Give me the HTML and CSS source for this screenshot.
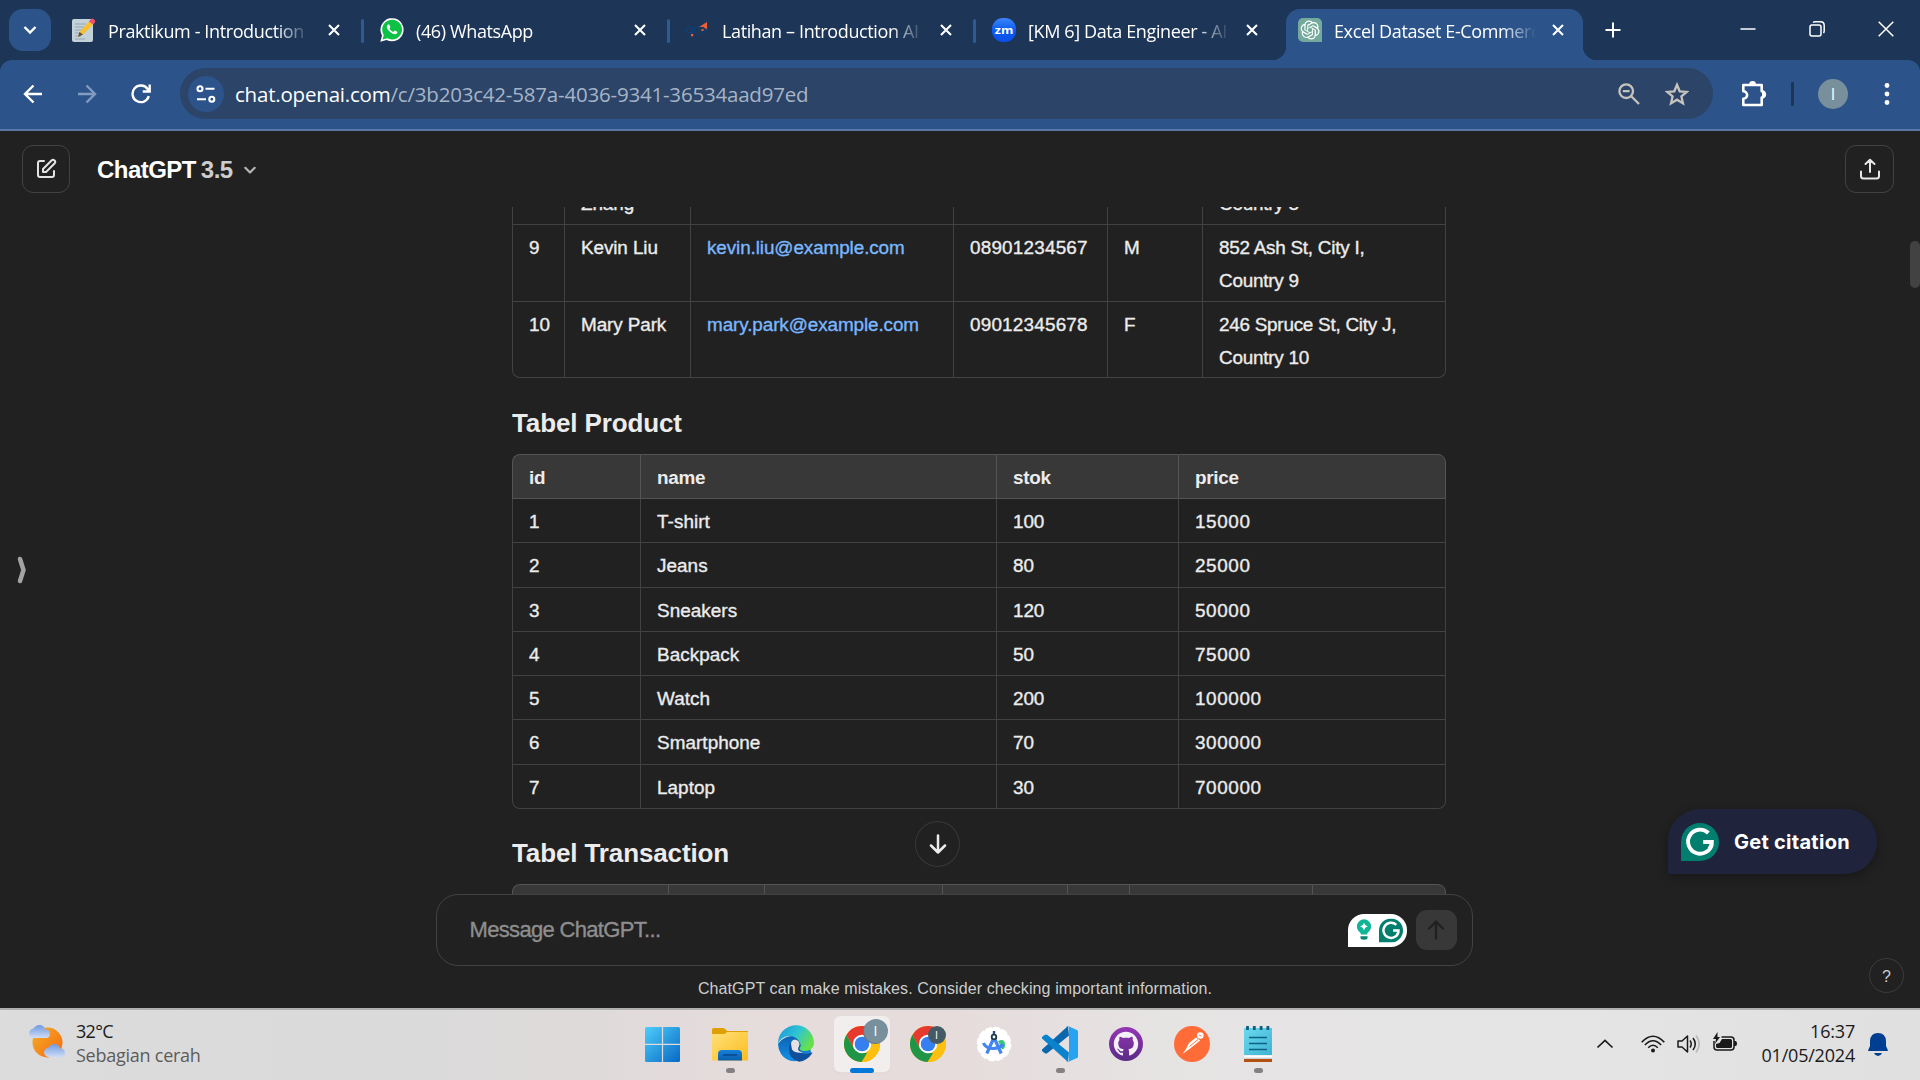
FILE: index.html
```html
<!DOCTYPE html>
<html lang="id">
<head>
<meta charset="utf-8">
<title>Excel Dataset E-Commerce</title>
<link rel="stylesheet" href="styles.css">
</head>
<body>
<svg class="defs" width="0" height="0" aria-hidden="true">
  <defs>
    <symbol id="close" viewBox="0 0 12 12"><path d="M1 1l10 10M11 1L1 11" fill="none" stroke="currentColor" stroke-width="2.1"/></symbol>
    <symbol id="grammarly" viewBox="0 0 38 38"><path d="M19 0a19 19 0 1 1 0 38H0V19A19 19 0 0 1 19 0z" fill="#027e6f"/><path d="M27.4 10A12 12 0 1 0 31 20.2M22.2 19h8.600q-.2 4-2.600 7" fill="none" stroke="#fff" stroke-width="3.900"/></symbol>
    <symbol id="chrome" viewBox="0 0 36 36">
      <circle cx="18" cy="18" r="18" fill="#fbbc09"/>
      <path d="M2.400 9A18 18 0 0 1 33.600 9H18L10.200 22.500z" fill="#e63a2e"/>
      <path d="M2.400 9L10.200 22.500 18 27H25.800L17.600 36A18 18 0 0 1 2.400 9z" fill="#209547"/>
      <path d="M33.600 9A18 18 0 0 1 17.600 36L25.800 22.500 18 9z" fill="#fdc00f"/>
      <circle cx="18" cy="18" r="9.200" fill="#fff"/><circle cx="18" cy="18" r="7.300" fill="#357ff0"/>
    </symbol>
    <linearGradient id="win" gradientUnits="userSpaceOnUse" x1="0" y1="0" x2="36" y2="36"><stop offset="0" stop-color="#4fd0fc"/><stop offset="1" stop-color="#0768c4"/></linearGradient>
    <linearGradient id="folder" x1="0" y1="0" x2="1" y2="1"><stop offset="0" stop-color="#ffe07a"/><stop offset="1" stop-color="#fcbd1e"/></linearGradient>
    <linearGradient id="blueV" x1="0" y1="0" x2="0" y2="1"><stop offset="0" stop-color="#1581dc"/><stop offset="1" stop-color="#0b5fab"/></linearGradient>
    <linearGradient id="edgeTop" x1="0" y1="0" x2="1" y2=".5"><stop offset="0" stop-color="#1792dc"/><stop offset=".55" stop-color="#2ec5d3"/><stop offset="1" stop-color="#66e04c"/></linearGradient>
    <linearGradient id="edgeLow" x1="0" y1="0" x2="0" y2="1"><stop offset="0" stop-color="#0b62b6"/><stop offset="1" stop-color="#1590e2"/></linearGradient>
    <linearGradient id="sun" x1="0" y1="0" x2="1" y2="1"><stop offset="0" stop-color="#f0b22c"/><stop offset="1" stop-color="#fb650a"/></linearGradient>
    <linearGradient id="cloud" x1="0" y1="0" x2="0" y2="1"><stop offset="0" stop-color="#6f9ae0"/><stop offset="1" stop-color="#cfdcf6"/></linearGradient>
    <linearGradient id="note" x1="0" y1="0" x2="1" y2="1"><stop offset="0" stop-color="#6bd9ee"/><stop offset="1" stop-color="#3fb3d3"/></linearGradient>
    <linearGradient id="zoomBlue" x1="0" y1="0" x2="0" y2="1"><stop offset="0" stop-color="#3c86f8"/><stop offset=".5" stop-color="#0b5cf2"/><stop offset="1" stop-color="#0a4fe6"/></linearGradient>
    <linearGradient id="purple" x1="0" y1="0" x2="0" y2="1"><stop offset="0" stop-color="#9437b4"/><stop offset="1" stop-color="#5b2a86"/></linearGradient>
  </defs>
</svg>

<header class="tabstrip">
  <button class="tab-search"><svg width="14" height="10" viewBox="0 0 14 10"><path d="M1.500 2l5.500 5.500L12.500 2" fill="none" stroke="#fff" stroke-width="2.400"/></svg></button>
  <div class="tabs">
    <div class="tab first">
      <svg class="fav" viewBox="0 0 24 24"><rect x="0" y="1" width="21" height="23" rx="2" fill="#c3d1d9"/><path d="M3 6h11M3 9h9M3 12h7M3 15h5M3 18h6M3 21h10" stroke="#93a7b3"/><path d="M6 19l1.500-5L18 2.500l4 3L11 16.500z" fill="#fbc02d"/><path d="M17 3.500l2-2.600q2-1.400 4 1.600.6 1-.2 2l-1.800 2z" fill="#ef4f6b"/><path d="M6 19l1.500-5 3.500 2.500z" fill="#5a5048"/></svg>
      <span class="title">Praktikum - Introduction AI</span><svg class="x"><use href="#close"/></svg>
    </div>
    <div class="tab">
      <svg class="fav" viewBox="0 0 24 24"><path d="M.3 23.800L2 17.600A11.600 11.600 0 1 1 6.600 22z" fill="#fff"/><path d="M2.500 21.600l1.300-4.600A9.900 9.900 0 1 1 7.400 20.300z" fill="#0cc143"/><path transform="translate(1.600 .9) scale(.87)" fill="#fff" d="M17.472 14.382c-.297-.149-1.758-.867-2.030-.967-.273-.099-.471-.148-.67.15-.197.297-.767.966-.94 1.164-.173.199-.347.223-.644.075-.297-.15-1.255-.463-2.390-1.475-.883-.788-1.480-1.761-1.653-2.059-.173-.297-.018-.458.13-.606.134-.133.298-.347.446-.52.149-.174.198-.298.298-.497.099-.198.05-.371-.025-.52-.075-.149-.669-1.612-.916-2.207-.242-.579-.487-.5-.669-.51-.173-.008-.371-.01-.57-.01-.198 0-.52.074-.792.372-.272.297-1.040 1.016-1.040 2.479 0 1.462 1.065 2.875 1.213 3.074.149.198 2.096 3.200 5.077 4.487.709.306 1.262.489 1.694.625.712.227 1.360.195 1.871.118.571-.085 1.758-.719 2.006-1.413.248-.694.248-1.289.173-1.413-.074-.124-.272-.198-.57-.347"/></svg>
      <span class="title">(46) WhatsApp</span><svg class="x"><use href="#close"/></svg>
    </div>
    <div class="tab">
      <svg class="fav" viewBox="0 0 24 24"><g fill="none" stroke="#123f73" stroke-width="1.300"><circle cx="3.500" cy="12" r="3"/><path d="M8.500 16v-4.500a2.400 2.400 0 0 1 5 0V16M16 12.500h5a2.600 2.600 0 1 0-1 2.500"/></g><path d="M13 9l8-5v7.500l-3.500-2.500zM5 16h2.200v2.200H5zM15.500 11h2v2h-2z" fill="#ec5f3a"/></svg>
      <span class="title">Latihan – Introduction AI</span><svg class="x"><use href="#close"/></svg>
    </div>
    <div class="tab last">
      <svg class="fav" viewBox="0 0 24 24"><rect width="24" height="24" rx="11" fill="url(#zoomBlue)"/><text x="12" y="15.800" text-anchor="middle" class="zm" textLength="18.500" lengthAdjust="spacingAndGlyphs">zm</text></svg>
      <span class="title">[KM 6] Data Engineer - AI</span><svg class="x"><use href="#close"/></svg>
    </div>
    <div class="tab active">
      <svg class="fav" viewBox="0 0 24 24"><path d="M5 0h14a5 5 0 0 1 5 5v19H5a5 5 0 0 1-5-5V5a5 5 0 0 1 5-5z" fill="#74aa9c"/><path transform="translate(2.600 2.500) scale(.79)" fill="#fff" d="M22.2819 9.8211a5.9847 5.9847 0 0 0-.5157-4.9108 6.0462 6.0462 0 0 0-6.5098-2.9A6.0651 6.0651 0 0 0 4.9807 4.1818a5.9847 5.9847 0 0 0-3.9977 2.9 6.0462 6.0462 0 0 0 .7427 7.0966 5.98 5.98 0 0 0 .511 4.9107 6.051 6.051 0 0 0 6.5146 2.9001A5.9847 5.9847 0 0 0 13.2599 24a6.0557 6.0557 0 0 0 5.7718-4.2058 5.9894 5.9894 0 0 0 3.9977-2.9001 6.0557 6.0557 0 0 0-.7475-7.0729zm-9.022 12.6081a4.4755 4.4755 0 0 1-2.8764-1.0408l.1419-.0804 4.7783-2.7582a.7948.7948 0 0 0 .3927-.6813v-6.7369l2.02 1.1686a.071.071 0 0 1 .038.052v5.5826a4.504 4.504 0 0 1-4.4945 4.4944zm-9.6607-4.1254a4.4708 4.4708 0 0 1-.5346-3.0137l.142.0852 4.783 2.7582a.7712.7712 0 0 0 .7806 0l5.8428-3.3685v2.3324a.0804.0804 0 0 1-.0332.0615L9.74 19.9502a4.4992 4.4992 0 0 1-6.1408-1.6464zM2.3408 7.8956a4.485 4.485 0 0 1 2.3655-1.9728V11.6a.7664.7664 0 0 0 .3879.6765l5.8144 3.3543-2.0201 1.1685a.0757.0757 0 0 1-.071 0l-4.8303-2.7865A4.504 4.504 0 0 1 2.3408 7.872zm16.5963 3.8558L13.1038 8.364 15.1192 7.2a.0757.0757 0 0 1 .071 0l4.8303 2.7913a4.4944 4.4944 0 0 1-.6765 8.1042v-5.6772a.79.79 0 0 0-.407-.667zm2.0107-3.0231l-.142-.0852-4.7735-2.7818a.7759.7759 0 0 0-.7854 0L9.409 9.2297V6.8974a.0662.0662 0 0 1 .0284-.0615l4.8303-2.7866a4.4992 4.4992 0 0 1 6.6802 4.66zM8.3065 12.863l-2.02-1.1638a.0804.0804 0 0 1-.038-.0567V6.0742a4.4992 4.4992 0 0 1 7.3757-3.4537l-.142.0805L8.704 5.459a.7948.7948 0 0 0-.3927.6813zm1.0976-2.3654l2.602-1.4998 2.6069 1.4998v2.9994l-2.5974 1.4997-2.6067-1.4997Z"/></svg>
      <span class="title">Excel Dataset E-Commerce</span><svg class="x"><use href="#close"/></svg>
    </div>
  </div>
  <svg class="plus" width="16" height="16" viewBox="0 0 16 16"><path d="M8 .5v15M.5 8h15" stroke="#fff" stroke-width="2"/></svg>
  <div class="window-controls">
    <svg width="16" height="16" viewBox="0 0 16 16"><path d="M.5 8h15" stroke="#fff" stroke-width="1.500"/></svg>
    <svg width="16" height="16" viewBox="0 0 16 16" fill="none" stroke="#fff" stroke-width="1.500"><rect x="1" y="4" width="11" height="11" rx="2"/><path d="M4 1.500q1-.7 2-.7h5.500q3.700 0 3.700 3.700V10q0 1-.7 2"/></svg>
    <svg width="16" height="16" viewBox="0 0 16 16"><path d="M.7.700l14.600 14.600M15.300.700L.7 15.300" stroke="#fff" stroke-width="1.500"/></svg>
  </div>
</header>

<nav class="toolbar">
  <div class="nav-buttons">
    <svg width="20" height="20" viewBox="0 0 20 20" fill="none" stroke="#fff" stroke-width="2.400"><path d="M19 10H2.500M10.500 1.500L2 10l8.500 8.500"/></svg>
    <svg width="20" height="20" viewBox="0 0 20 20" fill="none" stroke="#819bc1" stroke-width="2.400"><path d="M1 10h16.500M9.500 1.500L18 10l-8.500 8.500"/></svg>
    <svg width="20" height="20" viewBox="0 0 20 20" fill="none" stroke="#fff" stroke-width="2.400"><path d="M17.800 12.200A8.300 8.300 0 1 1 16.600 5L18 6.800M18.700.5v7h-7"/></svg>
  </div>
  <div class="omnibox">
    <span class="site"><svg width="20" height="18" viewBox="0 0 20 18" fill="none" stroke="#fff" stroke-width="2.100"><circle cx="4" cy="3.800" r="2.500"/><path d="M9.500 3.800h9M1 14.200h9"/><circle cx="15.800" cy="14.200" r="2.500"/></svg></span>
    <span class="url">chat.openai.com<span>/c/3b203c42-587a-4036-9341-36534aad97ed</span></span>
    <svg class="lens" width="22" height="22" viewBox="0 0 22 22" fill="none" stroke="#c6c3bf" stroke-width="2.300"><circle cx="8.200" cy="8.200" r="6.800"/><path d="M13 13l8 8M4.800 8.200h6.800"/></svg>
    <svg class="star" width="24" height="24" viewBox="0 0 24 24" fill="none" stroke="#c6c3bf" stroke-width="2.300"><path d="M12 2.800l2.700 6.500 7 .6-5.300 4.600 1.600 6.900-6-3.700-6 3.700 1.600-6.900L2.300 9.900l7-.6z"/></svg>
  </div>
  <svg class="puzzle" width="27" height="27" viewBox="0 0 27 27"><path d="M3.300 5h18.400v6.200a3.200 3.200 0 0 1 0 6.400V25H3.300v-6.200a3.800 3.800 0 0 0 0-7.600z" fill="none" stroke="#fff" stroke-width="2.600" stroke-linejoin="round"/><path d="M9.300 4.200a3.300 3.300 0 0 1 6.600 0zM22 11.200a3.300 3.300 0 0 1 0 6.600z" fill="#fff"/></svg>
  <i class="divider"></i>
  <span class="avatar">I</span>
  <svg class="dots" width="6" height="26" viewBox="0 0 6 26" fill="#fff"><circle cx="3" cy="4.500" r="2.400"/><circle cx="3" cy="13" r="2.400"/><circle cx="3" cy="21.500" r="2.400"/></svg>
</nav>

<main class="app">
  <div class="topbar">
    <button class="square"><svg width="24" height="24" viewBox="0 0 24 24" fill="#e3e3e3"><path fill-rule="evenodd" d="M16.793 2.793a3.121 3.121 0 1 1 4.414 4.414l-8.500 8.500A1 1 0 0 1 12 16H9a1 1 0 0 1-1-1v-3a1 1 0 0 1 .293-.707l8.500-8.500Zm3 1.414a1.121 1.121 0 0 0-1.586 0L10 12.414V14h1.586l8.207-8.207a1.121 1.121 0 0 0 0-1.586ZM6 5a1 1 0 0 0-1 1v12a1 1 0 0 0 1 1h12a1 1 0 0 0 1-1v-4a1 1 0 1 1 2 0v4a3 3 0 0 1-3 3H6a3 3 0 0 1-3-3V6a3 3 0 0 1 3-3h4a1 1 0 1 1 0 2H6Z"/></svg></button>
    <div class="model"><span>ChatGPT</span><span class="ver">3.5</span><svg width="12" height="9" viewBox="0 0 12 9"><path d="M1.300 1.800L6 6.500l4.700-4.700" fill="none" stroke="#b4b4b4" stroke-width="2.200" stroke-linecap="round" stroke-linejoin="round"/></svg></div>
    <button class="square share"><svg width="22" height="22" viewBox="0 0 22 22" fill="none" stroke="#e8e8e8" stroke-width="2" stroke-linecap="round" stroke-linejoin="round"><path d="M11 14V2M6.500 6L11 1.700 15.500 6M2 13.500V18q0 2.500 2.500 2.500h13Q20 20.500 20 18v-4.500"/></svg></button>
  </div>

  <div class="thread">
    <div class="message">
      <table class="customers">
        <colgroup><col class="w52"><col class="w126"><col class="w263"><col class="w154"><col class="w95"><col class="w244"></colgroup>
        <tr class="r8"><td>8</td><td>Linda Zhang</td><td></td><td></td><td></td><td>Cedar St, City H,<br>Country 8</td></tr>
        <tr class="r9"><td>9</td><td>Kevin Liu</td><td><a>kevin.liu@example.com</a></td><td class="phone">08901234567</td><td>M</td><td>852 Ash St, City I,<br>Country 9</td></tr>
        <tr class="r10"><td>10</td><td>Mary Park</td><td><a>mary.park@example.com</a></td><td class="phone">09012345678</td><td>F</td><td>246 Spruce St, City J,<br>Country 10</td></tr>
      </table>
      <h3 class="h-prod">Tabel Product</h3>
      <table class="products">
        <colgroup><col class="w128"><col class="w356"><col class="w182"><col class="w268"></colgroup>
        <thead><tr><th>id</th><th>name</th><th>stok</th><th>price</th></tr></thead>
        <tbody>
        <tr><td>1</td><td>T-shirt</td><td>100</td><td>15000</td></tr>
        <tr><td>2</td><td>Jeans</td><td>80</td><td>25000</td></tr>
        <tr><td>3</td><td>Sneakers</td><td>120</td><td>50000</td></tr>
        <tr><td>4</td><td>Backpack</td><td>50</td><td>75000</td></tr>
        <tr><td>5</td><td>Watch</td><td>200</td><td>100000</td></tr>
        <tr><td>6</td><td>Smartphone</td><td>70</td><td>300000</td></tr>
        <tr><td>7</td><td>Laptop</td><td>30</td><td>700000</td></tr>
        </tbody>
      </table>
      <h3 class="h-trans">Tabel Transaction</h3>
      <table class="transactions">
        <colgroup><col class="w156"><col class="w96"><col class="w178"><col class="w125"><col class="w62"><col class="w183"><col class="w134"></colgroup>
        <thead><tr><th></th><th></th><th></th><th></th><th></th><th></th><th></th></tr></thead>
      </table>
    </div>
    <button class="to-bottom"><svg width="18" height="20" viewBox="0 0 18 20" fill="none" stroke="#ececec" stroke-width="2.500" stroke-linecap="round" stroke-linejoin="round"><path d="M9 1.500v17M2 11.500l7 7 7-7"/></svg></button>
  </div>

  <div class="composer">
    <span class="placeholder">Message ChatGPT...</span>
    <span class="assist">
      <svg width="16" height="24" viewBox="0 0 18 26"><path d="M9 1a8 8 0 0 1 8 8c0 3-1.700 5-3.300 6.500-.8.800-1.200 1.500-1.200 2.500h-7c0-1-.4-1.700-1.200-2.500C2.700 14 1 12 1 9a8 8 0 0 1 8-8z" fill="#10b596"/><path d="M9 4.800q.8 3.600 4.400 4.400-3.600.8-4.400 4.400-.8-3.600-4.400-4.400Q8.200 8.400 9 4.800z" fill="#fff"/><path d="M5 20h8v1.500q0 2.500-4 2.500t-4-2.500z" fill="#078472"/></svg>
      <svg width="24" height="25"><use href="#grammarly" width="24" height="24" y=".5"/></svg>
    </span>
    <button class="send"><svg width="18" height="20" viewBox="0 0 18 20" fill="none" stroke="#202020" stroke-width="2.300" stroke-linecap="round" stroke-linejoin="round"><path d="M9 18.500v-17M2 8.500l7-7 7 7"/></svg></button>
  </div>
  <p class="notice">ChatGPT can make mistakes. Consider checking important information.</p>

  <svg class="drawer" width="10" height="28" viewBox="0 0 10 28"><path d="M3 3q3.500 11 3.500 11T3 25" fill="none" stroke="#a3a3a3" stroke-width="4.500" stroke-linecap="round"/></svg>
  <i class="scroll-thumb"></i>
  <div class="citation"><svg width="38" height="38"><use href="#grammarly"/></svg><span>Get citation</span></div>
  <span class="help">?</span>
</main>

<footer class="taskbar">
  <div class="weather">
    <svg width="38" height="36" viewBox="0 0 38 36"><circle cx="18.500" cy="18.500" r="15" fill="url(#sun)"/><path d="M5 14a4.700 4.700 0 0 1-.5-9.400Q6.500 1 10.500 1q4.500 0 5.500 4.500 4.500-.3 5 4.300-.2 4.200-4 4.200z" fill="url(#cloud)"/><path d="M20 33a4.700 4.700 0 0 1-.5-9.400Q21.500 20 25.500 20q4.500 0 5.500 4.500 4.500-.3 5 4.300-.2 4.200-4 4.200z" fill="url(#cloud)"/></svg>
    <div class="weather-text"><span>32°C</span><span class="muted">Sebagian cerah</span></div>
  </div>
  <div class="dock">
    <span><svg viewBox="1.500 0 36 36"><g fill="url(#win)"><path d="M.5 2.500q0-1.500 1.500-1.500h15.400v16.800H.5zM18.600 1H34q1.500 0 1.500 1.500v15.300H18.600zM.5 19h16.900v17H2Q.5 36 .5 34.500zM18.600 19h16.900v15.500q0 1.500-1.500 1.500H18.600z"/></g></svg></span>
    <span><svg viewBox="0 0 36 36"><path d="M0 8V3.500Q0 2 1.500 2H11q1 0 2 1l2.500 2H36v4H0z" fill="#dfa006"/><path d="M0 8h12q1 0 2-1l1-1h21v28.500H0z" fill="url(#folder)"/><path d="M6 34.500V28q0-4 4-4h16q4 0 4 4v6.500z" fill="url(#blueV)"/><path d="M11 29h14" stroke="#084a92" stroke-width="1.600"/></svg><i class="run"></i></span>
    <span><svg viewBox="0 0 36 36"><path d="M0 18a18 18 0 0 1 33 10q-3 5-10 6Q10 38 3 28 0 23 0 18z" fill="url(#edgeLow)"/><path d="M11 23c0-6 3-9 8-10l7 5c0 4-5 5-4 7 2 4 9 3 11.500 1.500 1-.3.8.5.5 1Q29 35 21 35.700 11 33 11 23z" fill="#0f4f9c"/><path d="M0 18A18 18 0 0 1 36 16.500C36 22 32 25 27 25c-4 0-6-1.500-5.500-3 1.500-1.500 1.500-3 .5-5Q18 9 10 10 2 11.500 0 18z" fill="url(#edgeTop)"/><path d="M13 18q0-4 4-4.500 4 .5 4.500 4.500 0 2-1.300 4-1 3 4.800 4.500-8 1-11-3z" fill="#e6e2e3"/></svg></span>
    <span class="tile"><svg viewBox="0 0 36 36"><use href="#chrome"/></svg><b class="badge big">I</b><i class="run on"></i></span>
    <span><svg viewBox="0 0 36 36"><use href="#chrome"/></svg><b class="badge small">I</b></span>
    <span><svg viewBox="0 0 36 36"><circle cx="18" cy="18" r="16.200" fill="#fff"/><circle cx="18" cy="18" r="16.200" fill="none" stroke="#fff" stroke-width="2.200" stroke-dasharray="5 3.480" stroke-linecap="round"/><path d="M22 15q7-3 7 4 0 4-3 4.500z" fill="#39c776"/><g fill="none" stroke="#4285f4" stroke-width="3.200"><path d="M17.300 13l-6.500 14.500M18.700 13l6.500 14.500"/><path d="M7.500 17q2 5.500 10 5.500 6-.5 10-4"/></g><path d="M18 5v6" stroke="#274c7c" stroke-width="2.400"/><circle cx="18" cy="11" r="2.300" fill="#fff" stroke="#1b3a4a" stroke-width="1.800"/></svg></span>
    <span><svg viewBox="0 0 36 36"><path d="M26 0L0 23.500v1.500l2.500 2Q4 28 5.500 27L27 9.500z" fill="#0a66ad"/><path d="M26 36L0 12.500v-1.500L2.500 9Q4 8 5.500 9L27 26.500z" fill="#0b82cc"/><path d="M26 0l9 4q1 .5 1 1.500v25q0 1-1 1.500l-9 4q-1 0-2-1 3 2 3-1V2q0-3-3-1 1-1 2-1z" fill="#27a3f1"/></svg><i class="run"></i></span>
    <span><svg viewBox="0 0 36 36"><circle cx="18" cy="18" r="17" fill="url(#purple)"/><path transform="translate(5.800 5.800) scale(1.525)" fill="#f4f0f6" d="M8 0C3.580 0 0 3.580 0 8c0 3.540 2.290 6.530 5.470 7.590.4.070.55-.17.55-.38 0-.19-.01-.82-.01-1.490-2.010.37-2.530-.49-2.690-.94-.09-.23-.48-.94-.82-1.130-.28-.15-.68-.52-.01-.53.63-.01 1.080.58 1.230.82.72 1.210 1.870.87 2.330.66.07-.52.28-.87.51-1.070-1.780-.2-3.640-.89-3.640-3.950 0-.87.31-1.590.82-2.150-.08-.2-.36-1.020.08-2.120 0 0 .67-.21 2.200.82.64-.18 1.320-.27 2-.27.68 0 1.360.09 2 .27 1.530-1.040 2.200-.82 2.200-.82.44 1.100.16 1.920.08 2.120.51.56.82 1.270.82 2.150 0 3.070-1.870 3.750-3.650 3.950.29.25.54.73.54 1.480 0 1.070-.01 1.930-.01 2.200 0 .21.15.46.55.38A8.013 8.013 0 0 0 16 8c0-4.420-3.580-8-8-8z"/></svg></span>
    <span><svg viewBox="0 0 36 36"><circle cx="18" cy="18" r="18" fill="#ff6c37"/><circle cx="26.300" cy="9.500" r="3.300" fill="#fff"/><path d="M15 17l7-5.500 4.200 3L15.500 23q-2 1-3.500 2.500L8.500 28 12 23z" fill="#fff"/><path d="M15.500 20.500l8.500-7M25 9l2.500 1" stroke="#ff6c37" stroke-width=".9"/></svg></span>
    <span><svg viewBox="0 0 36 36"><path d="M4 2h28v27H4z" fill="url(#note)"/><path d="M4 29.500h28V33H4z" fill="#fff"/><path d="M4 32.500h28V36H4z" fill="#b4500f"/><path d="M4 31.500h28v1.500H4z" fill="#cfd4d6"/><path d="M7.500 0v4M14.300 0v4M21.100 0v4M27.900 0v4" stroke="#0e5f7e" stroke-width="2.800"/><path d="M9 11.500h18M9 17.500h18M9 23.500h18" stroke="#0b6285" stroke-width="1.700"/></svg><i class="run"></i></span>
  </div>
  <div class="tray">
    <svg class="up" width="18" height="10" viewBox="0 0 18 10"><path d="M1.500 8.500L9 1.500l7.500 7" fill="none" stroke="#1a1a1a" stroke-width="1.700"/></svg>
    <svg class="wifi" width="24" height="18" viewBox="0 0 24 18" fill="none" stroke="#1a1a1a" stroke-width="1.600"><path d="M.7 7.200q11.300-12 22.600 0M3.900 10q8.100-8.500 16.200 0M7.200 12.800q4.800-5 9.600 0"/><circle cx="12" cy="15.500" r="2" fill="#1a1a1a" stroke="none"/></svg>
    <svg class="sound" width="24" height="20" viewBox="0 0 24 20" fill="none" stroke="#1a1a1a" stroke-width="1.500"><path d="M1 7h4l5.500-5v16L5 13H1z" stroke-linejoin="round"/><path d="M13 6.500q2.500 3.500 0 7M16 4q4.500 6 0 12"/><path d="M19 1.500q6.500 8.500 0 17" stroke="#b5b5b5"/></svg>
    <svg class="battery" width="24" height="20" viewBox="0 0 24 20"><path d="M8.500 5H18q3 0 3 3v7q0 3-3 3H4q-3 0-3-3V9" fill="none" stroke="#1a1a1a" stroke-width="1.500"/><path d="M9 7h8.500q1.500 0 1.500 1.500v6q0 1.500-1.500 1.500H4.500Q3 16 3 14.500V12l3.500-1zM21 9h1.500q1.500 0 1.500 2.500T22.500 14H21zM4.500 0L0 7h3l-1 5 5-7H4.500z" fill="#1a1a1a"/></svg>
    <div class="clock"><span>16:37</span><span>01/05/2024</span></div>
    <svg class="bell" width="20" height="24" viewBox="0 0 20 24" fill="#003e92"><path d="M10 0q7.500 0 8 8v5l1.800 4q.3 1-.8 1H1q-1.100 0-.8-1L2 13V8q.5-8 8-8zM6 20h8q-1.300 3-4 3t-4-3z"/></svg>
  </div>
</footer>
</body>
</html>
```
FILE: styles.css
```css
* { box-sizing: border-box; }
body {
  margin: 0; width: 1920px; height: 1080px; overflow: hidden;
  display: grid; grid-template-rows: 60px 71px 877px 72px;
  background: #1d3557; color: #ececec;
  font-family: "Liberation Sans", Arial, sans-serif;
}
button { border: 0; padding: 0; background: none; display: grid; place-items: center; }
svg { display: block; flex: none; }
.defs { position: absolute; }

/* tab strip */
.tabstrip { display: flex; align-items: flex-start; padding: 9px 26px 0 9px; background: #1d3557; }
.tab-search { width: 42px; height: 42px; border-radius: 14px; background: #2c548a; }
.tabs { display: flex; margin-left: 9px; }
.tab {
  position: relative; width: 306px; height: 51px; padding: 0 22px 9px 12px;
  display: flex; align-items: center;
}
.tab::after { content: ""; position: absolute; right: 4px; top: 10px; width: 3px; height: 24px; border-radius: 2px; background: #2f5a93; }
.tab.last::after, .tab.active::after { display: none; }
.tab.first { width: 308px; }
.tab.active { width: 297px; padding-right: 19px; background: #2c548a; border-radius: 14px 14px 0 0; }
.tab.active::before {
  content: ""; position: absolute; left: -14px; right: -14px; bottom: 0; height: 14px;
  background:
    radial-gradient(circle at 0 0, transparent 14px, #2c548a 14.5px) left / 14px 14px no-repeat,
    radial-gradient(circle at 100% 0, transparent 14px, #2c548a 14.5px) right / 14px 14px no-repeat;
}
.fav { width: 24px; height: 24px; margin-right: 12px; }
.zm { font: bold 11px "Open Sans", sans-serif; fill: #fff; }
.title {
  flex: none; width: 204px; padding-top: 2px; overflow: hidden; white-space: nowrap;
  font: 18px/26px "Open Sans", "Noto Sans", sans-serif; letter-spacing: -.38px; color: #fff;
  mask-image: linear-gradient(90deg, #000 168px, transparent 202px);
}
.x { width: 12px; height: 12px; margin-left: 14px; color: #fff; }
.first .x { margin-left: 16px; }
.plus { margin: 13px 0 0 22px; }
.window-controls { display: flex; gap: 53px; margin: 12px 0 0 auto; }

/* toolbar */
.toolbar {
  display: flex; align-items: center; padding: 0 30px 2px 23px;
  background: #2c548a; border-bottom: 2px solid #5877a4; border-radius: 12px 12px 0 0;
}
.nav-buttons { display: flex; gap: 34px; width: 157px; }
.omnibox {
  flex: none; width: 1533px; height: 51px; border-radius: 26px; padding: 0 24px 0 8px;
  display: flex; align-items: center; background: #2b4468;
}
.site { width: 36px; height: 36px; border-radius: 50%; background: #2c548a; display: grid; place-items: center; }
.url { flex: 1; margin-left: 11px; font: 20.500px/30px "Open Sans", "Noto Sans", sans-serif; letter-spacing: -.2px; color: #fff; white-space: nowrap; }
.url span { color: #a7b4c6; }
.star { margin-left: 25px; }
.puzzle { margin-left: 27px; }
.divider { width: 3px; height: 24px; margin-left: 24px; background: #1d3557; border-radius: 1px; }
.avatar {
  width: 30px; height: 30px; margin-left: 24px; border-radius: 50%; background: #78909c;
  font: 16px/30px "Open Sans", sans-serif; text-align: center; color: #fff;
}
.dots { margin-left: 36px; }

/* chat page */
.app { position: relative; background: #212121; display: grid; grid-template-rows: 76px 687px 72px 42px; justify-items: center; }
.topbar { justify-self: stretch; display: flex; align-items: flex-start; padding: 14px 26px 0 22px; }
.square { width: 48px; height: 48px; border: 1px solid #424242; border-radius: 11px; }
.share { width: 49px; margin-left: auto; }
.model { display: flex; align-items: center; height: 49px; margin-left: 27px; font-weight: bold; font-size: 24px; letter-spacing: -.55px; color: #fff; }
.model .ver { margin-left: 5px; color: #cdcdcd; }
.model svg { margin: 2px 0 0 11px; }

.thread { position: relative; width: 934px; overflow: hidden; left: 19px; }
.message { margin-top: -59px; }
table { width: 934px; table-layout: fixed; border-collapse: separate; border-spacing: 0; font-size: 18.9px; line-height: 32.5px; letter-spacing: -.1px; }
td, th { padding: 7px 0 0 16px; text-align: left; vertical-align: top; border-left: 1px solid #424242; border-bottom: 1px solid #424242; white-space: nowrap; }
td { -webkit-text-stroke: .35px currentColor; }
td:last-child, th:last-child { border-right: 1px solid #424242; }
th { background: #383838; border-color: #545454; border-top: 1px solid #545454; letter-spacing: -.3px; padding-top: 6.500px; }
th:last-child { border-right-color: #545454; border-top-right-radius: 8px; }
th:first-child { border-top-left-radius: 8px; }
tr:last-child td:first-child { border-bottom-left-radius: 8px; }
tr:last-child td:last-child { border-bottom-right-radius: 8px; }
.customers td:nth-child(2) { white-space: normal; padding-right: 12px; }
.customers td:last-child { letter-spacing: -.25px; }
.customers .phone { letter-spacing: .2px; }
.products td:nth-child(2) { letter-spacing: .05px; }
.products td:last-child { letter-spacing: .6px; }
.r8, .r9 { height: 77px; }
.r10 { height: 76px; }
.customers a { color: #7ab7ff; }
.products thead tr { height: 45px; }
.products tbody tr { height: 44.29px; }
.transactions tr { height: 45px; }
h3 { margin: 0; padding-top: 29px; font-size: 26px; line-height: 30px; letter-spacing: -.12px; }
.h-prod { height: 76px; padding-top: 30px; }
.h-trans { height: 75px; }
.w52 { width: 52px; } .w126 { width: 126px; } .w263 { width: 263px; } .w154 { width: 154px; } .w95 { width: 95px; } .w244 { width: 244px; }
.w128 { width: 128px; } .w356 { width: 356px; } .w182 { width: 182px; } .w268 { width: 268px; }
.w156 { width: 156px; } .w96 { width: 96px; } .w178 { width: 178px; } .w125 { width: 125px; } .w62 { width: 62px; } .w183 { width: 183px; } .w134 { width: 134px; }
.to-bottom { position: absolute; left: 403px; top: 614px; width: 45px; height: 46px; border: 1px solid #383838; border-radius: 50%; background: #212121; }

.composer {
  position: relative; left: -6px; width: 1037px; height: 72px; padding: 0 15px 0 33px;
  display: flex; align-items: center; border: 1px solid #424242; border-radius: 22px; background: #212121;
}
.placeholder { flex: 1; font-size: 22px; letter-spacing: -.67px; color: #8e8e8e; -webkit-text-stroke: .35px currentColor; }
.assist { width: 59px; height: 33px; padding: 0 4px 0 8px; display: flex; align-items: center; justify-content: space-between; background: #fff; border-radius: 16px 16px 16px 0; }
.send { width: 41px; height: 40px; margin-left: 9px; border-radius: 11px; background: #383838; }
.notice { position: relative; left: -5px; margin: 0; font-size: 16px; line-height: 45px; letter-spacing: .1px; color: #cdcdcd; }

.drawer { position: absolute; left: 17px; top: 425px; }
.scroll-thumb { position: absolute; right: 0; top: 110px; width: 10px; height: 47px; border-radius: 5px; background: #424242; }
.citation {
  position: absolute; left: 1668px; top: 678px; width: 209px; height: 65px; padding-left: 13px;
  display: flex; align-items: center; gap: 15px; background: #1f243c; border-radius: 32px 32px 32px 0;
  box-shadow: 0 3px 12px rgba(0, 0, 0, .3); font: 700 20px Inter, sans-serif; letter-spacing: .27px; color: #fff;
}
.help { position: absolute; left: 1869px; top: 827px; width: 35px; height: 35px; border: 1px solid #3c3c3c; border-radius: 50%; text-align: center; font-size: 16px; line-height: 35px; color: #cdcdcd; }

/* taskbar */
.taskbar {
  display: grid; grid-template-columns: 630.5px 660px 1fr; border-top: 2px solid #b0b0b0;
  background: linear-gradient(90deg, #dcdcdc 0, #dadada 20%, #dfdada 31%, #e6dcdc 40%, #e6dcdc 50%, #e6e3e3 60%, #e5e5e5 80%, #e0e0e0 100%);
  color: #1a1a1a; font: 18px/24px "Open Sans", "Noto Sans", sans-serif;
}
.weather { display: flex; align-items: flex-start; padding: 14px 0 0 29px; }
.weather-text { display: flex; flex-direction: column; margin: -5px 0 0 9px; letter-spacing: -.25px; }
.weather-text span:first-child { letter-spacing: -.7px; }
.muted { color: #5c5c5c; }
.dock { display: grid; grid-template-columns: repeat(10, 66px); }
.dock > span { position: relative; display: grid; justify-items: center; align-content: start; padding-top: 16px; }
.dock svg { width: 36px; height: 36px; overflow: visible; }
.dock > .tile::before { content: ""; position: absolute; left: 5px; top: 6px; width: 56px; height: 56px; border-radius: 6px; background: #f2eeee; box-shadow: 0 0 0 1px #e3dcdc, 0 1px 1px #c9c2c2; }
.tile svg { position: relative; }
.run { position: absolute; left: 29px; top: 58px; width: 9px; height: 5px; border-radius: 3px; background: #858182; }
.run.on { left: 21px; width: 24px; background: #0078d7; }
.badge { position: absolute; border-radius: 50%; text-align: center; font-family: "Open Sans", sans-serif; font-weight: 400; color: #fff; }
.badge.big { left: 35px; top: 9px; width: 24px; height: 24px; font-size: 14px; line-height: 24px; background: #78909c; box-shadow: -1px 1px 0 #647b87; }
.badge.small { left: 33px; top: 16px; width: 18px; height: 18px; font-size: 11px; line-height: 18px; background: #455a64; }
.tray { display: flex; align-items: flex-start; padding: 0 32px 0 0; justify-content: flex-end; }
.up { margin: 29px 27px 0 0; }
.wifi { margin: 25px 12px 0 0; }
.sound { margin: 24px 12px 0 0; }
.battery { margin: 22px 24px 0 0; }
.clock { display: flex; flex-direction: column; align-items: flex-end; margin: 9px 13px 0 0; letter-spacing: -.2px; }
.bell { margin-top: 23px; }
```
